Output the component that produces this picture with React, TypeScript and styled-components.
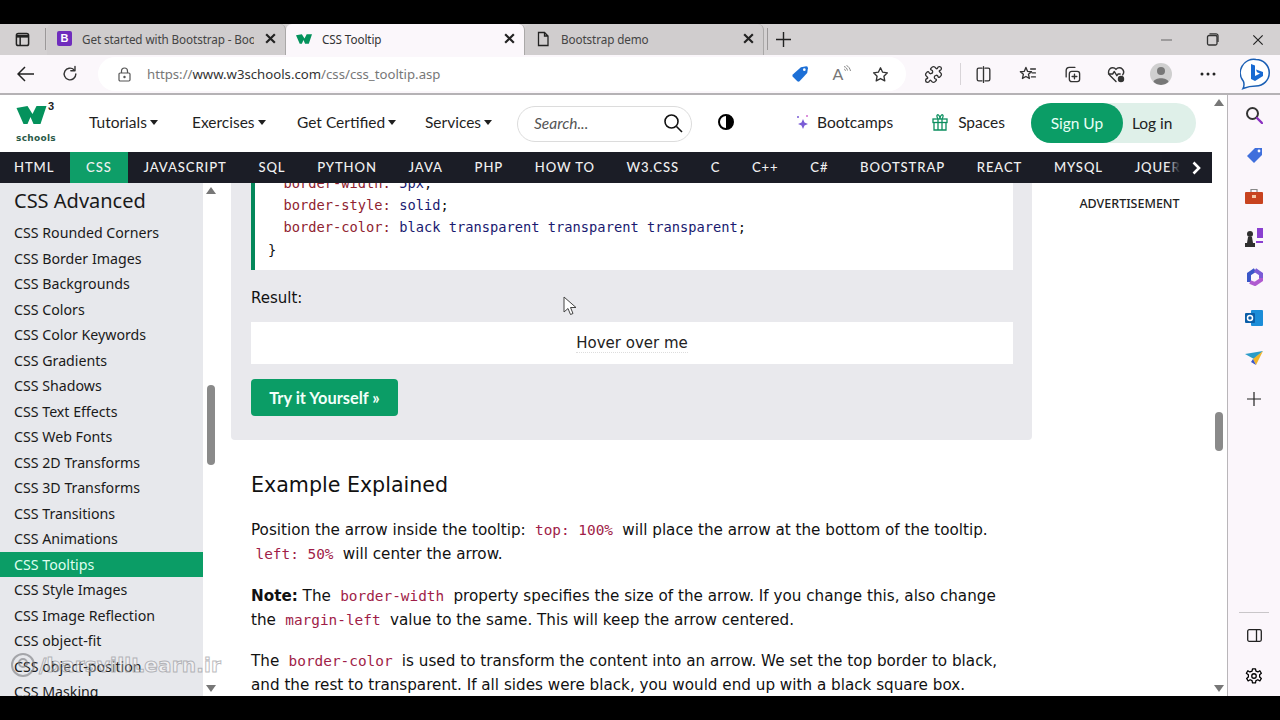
import React from "react";
import styled, { createGlobalStyle } from "styled-components";
import { Puzzle } from "lucide-react";

const Global = createGlobalStyle`
  html, body { margin: 0; padding: 0; background: #000; overflow: hidden; }
  * { box-sizing: border-box; }
`;

const Frame = styled.div`
  position: relative;
  width: 1280px;
  height: 720px;
  display: flex;
  flex-direction: column;
  background: #000;
  overflow: hidden;
  font-family: "Lato", "Noto Sans", sans-serif;
`;
const BlackBar = styled.div`
  flex: 0 0 24px;
  background: #000;
`;
const TabStrip = styled.div`
  flex: 0 0 31px;
  display: flex;
  align-items: stretch;
  background: #d4d1d2;
  color: #222;
`;
const StripIcon = styled.div<{ $w: number }>`
  flex: 0 0 ${(p) => p.$w}px;
  display: flex;
  align-items: center;
  justify-content: center;
`;
const StripSep = styled.div`
  flex: 0 0 1px;
  margin: 4px 0 5px;
  background: #9b9899;
`;
const Tab = styled.div<{ $active?: boolean }>`
  flex: 0 0 239px;
  min-width: 0;
  display: flex;
  align-items: center;
  gap: 10px;
  padding: 0 8px 2px 10px;
  font-family: "Noto Sans", sans-serif;
  font-size: 11.7px;
  letter-spacing: -0.1px;
  color: ${(p) => (p.$active ? "#333" : "#444")};
  background: ${(p) => (p.$active ? "#fbf7fb" : "#d0cdce")};
  border-right: 1px solid #aaa8a8;
  border-radius: 6px 6px 0 0;
`;
const TabTitle = styled.span`
  flex: 1;
  min-width: 0;
  white-space: nowrap;
  overflow: hidden;
`;
const FaviconB = styled.span`
  flex: 0 0 15px;
  height: 15px;
  border-radius: 2px;
  background: #6f2dbd;
  color: #fff;
  font: 700 11px/15px "Liberation Sans", sans-serif;
  text-align: center;
`;
const Spacer = styled.div`
  flex: 1;
`;
const Toolbar = styled.div`
  flex: 0 0 38px;
  display: flex;
  align-items: center;
  background: #fbf7fb;
  padding-left: 4px;
`;
const Slot = styled.div<{ $w: number }>`
  flex: 0 0 ${(p) => p.$w}px;
  height: 30px;
  display: flex;
  align-items: center;
  justify-content: center;
  color: #333;
`;
const AddressBar = styled.div`
  flex: 0 0 808px;
  height: 34px;
  margin-left: 6px;
  display: flex;
  align-items: center;
  padding: 0 9px 0 14px;
  background: #fff;
  border-radius: 17px;
`;
const Url = styled.span`
  flex: 1;
  margin-left: 11px;
  font-family: "Noto Sans", sans-serif;
  font-size: 13.2px;
  color: #777;
  white-space: nowrap;
  b { font-weight: 400; color: #333; }
`;
const ReadAloud = styled.span`
  display: flex;
  align-items: flex-start;
  font-size: 16px;
  line-height: 18px;
  color: #777;
`;
const ToolSep = styled.div`
  flex: 0 0 1px;
  height: 22px;
  background: #d8d4d8;
`;
const Workspace = styled.div`
  flex: 1;
  display: flex;
  min-height: 0;
  border-top: 2px solid #b5b2b5;
`;
const Browser = styled.div`
  position: relative;
  flex: 0 0 1228px;
  display: flex;
  flex-direction: column;
  min-width: 0;
  background: #fff;
  border-right: 1px solid #b9b6b9;
`;
const Rail = styled.div`
  flex: 1;
  display: flex;
  flex-direction: column;
  align-items: center;
  background: #fbf6fb;
`;
const RailSlot = styled.div`
  flex: 0 0 40.5px;
  display: flex;
  align-items: center;
  justify-content: center;
`;
const RailRule = styled.div`
  width: 30px;
  height: 1px;
  margin: auto 0 2px;
  background: #c9c6c9;
`;
const Header = styled.header`
  flex: 0 0 57px;
  display: flex;
  align-items: center;
  padding-bottom: 3px;
`;
const Logo = styled.div`
  flex: 0 0 89px;
  padding: 5px 0 0 16px;
  display: flex;
  flex-direction: column;
  color: #04925c;
`;
const LogoMark = styled.div`
  display: flex;
  align-items: flex-start;
  height: 27px;
`;
const LogoThree = styled.span`
  margin: -4px 0 0 1px;
  font: 700 11px/11px "Liberation Sans", sans-serif;
  color: #222;
`;
const LogoWord = styled.span`
  font: 700 9px/12px "DejaVu Sans", sans-serif;
  color: #2a5a48;
  letter-spacing: 0.3px;
`;
const Menu = styled.div`
  display: flex;
  align-items: center;
  font-size: 15.5px;
  color: #1f1f1f;
  white-space: nowrap;
`;
const MenuItem = styled.span<{ $w: number }>`
  flex: 0 0 ${(p) => p.$w}px;
  display: flex;
  align-items: center;
  gap: 3px;
  &::after {
    content: "";
    border: 4px solid transparent;
    border-top: 5px solid #1f1f1f;
    border-bottom: 0;
  }
`;
const Search = styled.div`
  flex: 0 0 175px;
  height: 36px;
  margin-top: 3px;
  display: flex;
  align-items: center;
  justify-content: space-between;
  padding: 0 8px 2px 16px;
  border: 1px solid #dcdcdc;
  border-radius: 18px;
  font-size: 15.5px;
  font-style: italic;
  color: #555;
`;
const Contrast = styled.div`
  flex: 0 0 16px;
  height: 16px;
  margin-left: 26px;
  border-radius: 50%;
  border: 2px solid #000;
  background: linear-gradient(90deg, #fff 50%, #000 50%);
`;
const HeaderLink = styled.span<{ $ml: number; $gap: number }>`
  margin-left: ${(p) => p.$ml}px;
  display: flex;
  align-items: center;
  gap: ${(p) => p.$gap}px;
  font-size: 15.5px;
  color: #222;
`;
const AuthPill = styled.div`
  margin: 1px 0 0 26px;
  flex: 0 0 165px;
  height: 40px;
  display: flex;
  align-items: center;
  border-radius: 20px;
  background: #dff0e9;
  font-size: 15.5px;
  color: #222;
`;
const SignUp = styled.span`
  flex: 0 0 92px;
  height: 40px;
  display: flex;
  align-items: center;
  justify-content: center;
  border-radius: 20px;
  background: #0b9d66;
  color: #e8fff5;
`;
const LogIn = styled.span`
  margin-left: 9px;
`;
const Nav = styled.nav`
  position: relative;
  flex: 0 0 31px;
  width: 1212px;
  display: flex;
  align-items: stretch;
  background: #1b1d26;
  overflow: hidden;
`;
const NavItem = styled.span<{ $active?: boolean }>`
  flex: none;
  display: flex;
  align-items: center;
  padding: 0 15.85px 1px;
  font-size: 13.1px;
  font-weight: 500;
  letter-spacing: 0.9px;
  color: #f0f0f0;
  white-space: nowrap;
  background: ${(p) => (p.$active ? "#0e9e68" : "transparent")};
  &:first-child { padding-left: 14px; }
`;
const NavMore = styled.span`
  position: absolute;
  right: 0;
  top: 0;
  bottom: 0;
  width: 32px;
  display: flex;
  align-items: center;
  justify-content: center;
  background: #1b1d26;
  box-shadow: -6px 0 8px #1b1d26;
  color: #fff;
`;
const Body = styled.div`
  flex: 1;
  display: flex;
  min-height: 0;
`;
const Sidebar = styled.aside`
  flex: 0 0 203px;
  overflow: hidden;
  background: #e7e8ec;
  color: #1a1a1a;
  font-family: "Noto Sans", sans-serif;
`;
const SideTitle = styled.h2`
  margin: 0;
  height: 37px;
  padding: 0 0 2px 14px;
  display: flex;
  align-items: center;
  font-size: 20px;
  font-weight: 400;
`;
const SideItem = styled.div<{ $active?: boolean }>`
  height: 25.5px;
  padding-left: 14px;
  display: flex;
  align-items: center;
  font-size: 14.2px;
  white-space: nowrap;
  color: ${(p) => (p.$active ? "#dffff0" : "#1a1a1a")};
  background: ${(p) => (p.$active ? "#0b9d66" : "transparent")};
`;
const SideScroll = styled.div`
  flex: 0 0 16px;
  display: flex;
  flex-direction: column;
  align-items: center;
  justify-content: space-between;
  padding: 4px 0 4px;
  background: #fff;
`;
const ScrollThumb = styled.div<{ $h: number; $mt: number }>`
  width: 8px;
  height: ${(p) => p.$h}px;
  margin-top: ${(p) => p.$mt}px;
  border-radius: 4px;
  background: #8a8a8a;
`;
const ArrowUp = styled.div`
  border: 5px solid transparent;
  border-top: 0;
  border-bottom: 7px solid #777;
`;
const ArrowDown = styled.div`
  border: 5px solid transparent;
  border-bottom: 0;
  border-top: 7px solid #777;
`;
const Main = styled.main`
  flex: 0 0 813px;
  padding: 0 0 0 12px;
  overflow: hidden;
`;
const Panel = styled.section`
  width: 801px;
  height: 257px;
  padding: 0 19px 0 20px;
  background: #e9e9ed;
  border-radius: 0 0 4px 4px;
`;
const CodeBox = styled.div`
  height: 87px;
  overflow: hidden;
  background: #fff;
  border-left: 4px solid #04875a;
  padding: 0 0 9px 13px;
  display: flex;
  flex-direction: column;
  justify-content: flex-end;
  font: 13.72px/22.3px "DejaVu Sans Mono", monospace;
  color: #111;
`;
const CodeLine = styled.div<{ $indent?: boolean }>`
  flex: none;
  white-space: pre;
  padding-left: ${(p) => (p.$indent ? 15.5 : 0)}px;
`;
const Prop = styled.span`
  color: #8f2330;
`;
const Val = styled.span`
  color: #1a1a70;
`;
const ResultLabel = styled.div`
  height: 52px;
  padding-top: 4px;
  display: flex;
  align-items: center;
  font: 15px "DejaVu Sans", sans-serif;
  color: #111;
`;
const ResultBox = styled.div`
  height: 42px;
  background: #fff;
  display: flex;
  align-items: center;
  justify-content: center;
  font: 15px "DejaVu Sans", sans-serif;
  color: #222;
`;
const HoverText = styled.span`
  border-bottom: 1px dotted #dddddd;
`;
const TryButton = styled.div`
  width: 147px;
  height: 37px;
  margin-top: 15px;
  padding-bottom: 1px;
  display: flex;
  align-items: center;
  justify-content: center;
  background: #0b9d66;
  border-radius: 4px;
  color: #f2fff9;
  font-size: 16.4px;
  font-weight: 700;
`;
const Article = styled.article`
  padding: 0 17px 0 20px;
  color: #111;
  font: 15.2px/24px "DejaVu Sans", sans-serif;
  white-space: nowrap;
`;
const H2 = styled.h2`
  margin: 27px 0 0;
  height: 36px;
  line-height: 36px;
  font-size: 20.6px;
  font-weight: 400;
`;
const Para = styled.p`
  margin: 15px 0 0;
  & + & { margin-top: 17.5px; }
`;
const InlineCode = styled.code`
  padding: 0 4.5px;
  font: 14.4px "DejaVu Sans Mono", monospace;
  color: #a01d48;
`;
const Ads = styled.div`
  flex: 1;
  padding-top: 12px;
  text-align: center;
  font: 500 12.5px "Noto Sans", sans-serif;
  color: #222;
`;
const PageScroll = styled.div`
  position: absolute;
  right: 0;
  top: 0;
  bottom: 0;
  width: 16px;
  display: flex;
  flex-direction: column;
  align-items: center;
  justify-content: space-between;
  padding: 4px 0;
`;
const Cursor = styled.svg`
  position: absolute;
  left: 563px;
  top: 201px;
`;
const Watermark = styled.div`
  position: absolute;
  left: 10px;
  bottom: 18px;
  display: flex;
  align-items: center;
  gap: 3px;
  font: 700 20px "DejaVu Sans", sans-serif;
  color: rgba(255, 255, 255, 0.35);
  -webkit-text-stroke: 1px rgba(120, 120, 125, 0.5);
  letter-spacing: 0.2px;
`;
const BottomBar = styled.div`
  flex: 0 0 24px;
  background: #000;
`;

const Stroke = ({ size = 18, children }: { size?: number; children: React.ReactNode }) => (
  <svg width={size} height={size} viewBox="0 0 24 24" fill="none" stroke="currentColor" strokeWidth="1.7" strokeLinecap="round" strokeLinejoin="round">
    {children}
  </svg>
);

const X = ({ size = 13, w = 2 }: { size?: number; w?: number }) => (
  <svg width={size} height={size} viewBox="0 0 12 12" stroke="#222" strokeWidth={w} fill="none">
    <path d="M2 2l8 8M10 2l-8 8" />
  </svg>
);

const side = [
  "CSS Rounded Corners", "CSS Border Images", "CSS Backgrounds", "CSS Colors", "CSS Color Keywords",
  "CSS Gradients", "CSS Shadows", "CSS Text Effects", "CSS Web Fonts", "CSS 2D Transforms",
  "CSS 3D Transforms", "CSS Transitions", "CSS Animations", "CSS Tooltips", "CSS Style Images",
  "CSS Image Reflection", "CSS object-fit", "CSS object-position", "CSS Masking",
];
const nav = ["HTML", "CSS", "JAVASCRIPT", "SQL", "PYTHON", "JAVA", "PHP", "HOW TO", "W3.CSS", "C", "C++", "C#", "BOOTSTRAP", "REACT", "MYSQL", "JQUERY"];

export default function App() {
  return (
    <Frame>
      <Global />
      <BlackBar />
      <TabStrip>
        <StripIcon $w={45}>
          <svg width="15" height="15" viewBox="0 0 16 16" fill="none" stroke="#222" strokeWidth="1.6">
            <rect x="1.5" y="1.5" width="13" height="13" rx="2" />
            <path d="M1.5 4.5h13" strokeWidth="3" />
            <path d="M5.5 5v9" />
          </svg>
        </StripIcon>
        <StripSep />
        <StripIcon $w={1} />
        <Tab>
          <FaviconB>B</FaviconB>
          <TabTitle>Get started with Bootstrap - Boot</TabTitle>
          <X />
        </Tab>
        <Tab $active>
          <svg width="16" height="12" viewBox="0 0 30 20"><path d="M0 3L11 1l5 8 4-8h10l-6 18h-7l-3-7-3 7H7z" fill="#04925c" /></svg>
          <TabTitle>CSS Tooltip</TabTitle>
          <X />
        </Tab>
        <Tab>
          <svg width="16" height="16" viewBox="0 0 16 16" fill="none" stroke="#222" strokeWidth="1.3"><path d="M3.5 1.5h6l3.5 3.5v9.500h-9.500zM9.500 1.500V5H13" /></svg>
          <TabTitle>Bootstrap demo</TabTitle>
          <X />
        </Tab>
        <StripIcon $w={3} />
        <StripSep />
        <StripIcon $w={31}>
          <svg width="15" height="15" viewBox="0 0 15 15" stroke="#222" strokeWidth="1.4"><path d="M7.500 0v15M0 7.500h15" /></svg>
        </StripIcon>
        <Spacer />
        <StripIcon $w={46}>
          <svg width="11" height="2" viewBox="0 0 11 2"><path d="M0 1h11" stroke="#777" strokeWidth="1.2" /></svg>
        </StripIcon>
        <StripIcon $w={47}>
          <svg width="13" height="13" viewBox="0 0 13 13" fill="none" stroke="#333" strokeWidth="1.3"><rect x="1.500" y="2.500" width="9.500" height="9.500" rx="1.500" /><path d="M3.500 .8h6.500a2 2 0 0 1 2 2V9" /></svg>
        </StripIcon>
        <StripIcon $w={44}><X size={14} w={1} /></StripIcon>
      </TabStrip>
      <Toolbar>
        <Slot $w={44}>
          <svg width="18" height="16" viewBox="0 0 18 16" fill="none" stroke="#222" strokeWidth="1.5"><path d="M17 8H1.500M8 1L1 8l7 7" /></svg>
        </Slot>
        <Slot $w={44}>
          <Stroke size={20}><path d="M19 12a7 7 0 1 1-2.200-5.100" /><path d="M18 3v5h-5" /></Stroke>
        </Slot>
        <AddressBar>
          <Slot $w={24}>
            <svg width="13" height="15" viewBox="0 0 13 15" fill="none" stroke="#555" strokeWidth="1.2"><rect x="1" y="6" width="11" height="8" rx="1.200" /><path d="M3.500 6V4a3 3 0 0 1 6 0v2" /><circle cx="6.500" cy="10" r=".6" fill="#555" /></svg>
          </Slot>
          <Url>https://<b>www.w3schools.com</b>/css/css_tooltip.asp</Url>
          <Slot $w={42}>
            <svg width="18" height="18" viewBox="0 0 20 20"><path d="M11 2.500L17 1.500Q19 1.500 18.800 3.500L18 9 9.500 18Q8.300 19 7 18L2 13Q1 11.800 2 10.500Z" fill="#1c6fd6" /><circle cx="14.800" cy="5.200" r="1.500" fill="#fff" /></svg>
          </Slot>
          <Slot $w={42}>
            <ReadAloud>
              A
              <svg width="8" height="10" viewBox="0 0 8 10" fill="none" stroke="#888" strokeWidth="1"><path d="M1 1.500c2 .5 3 2 3.500 4M1 4c1 .3 1.300 1 1.500 2M3.500 .5c2 .8 3.500 3 4 5.500" /></svg>
            </ReadAloud>
          </Slot>
          <Slot $w={34}>
            <Stroke size={19}><path d="M12 3.500l2.700 5.600 6 .8-4.400 4.200 1.100 6-5.400-3-5.400 3 1.100-6L3.300 9.900l6-.8z" /></Stroke>
          </Slot>
        </AddressBar>
        <Slot $w={54}>
          <Puzzle size={19} strokeWidth={1.7} />
        </Slot>
        <ToolSep />
        <Slot $w={44}>
          <Stroke size={19}><path d="M10 4H6a2 2 0 0 0-2 2v12a2 2 0 0 0 2 2h4M14 4h4a2 2 0 0 1 2 2v12a2 2 0 0 1-2 2h-4M12 2v20" /></Stroke>
        </Slot>
        <Slot $w={45}>
          <Stroke size={19}><path d="M10 3l2 5 5 .5-3.800 3.300 1.200 5.200L10 14.500 5.600 17l1.200-5.200L3 8.500 8 8zM16 5h6M18 10h4M17 15h5" /></Stroke>
        </Slot>
        <Slot $w={44}>
          <Stroke size={19}><rect x="8" y="8" width="13" height="13" rx="3" /><path d="M4 15V7a4 4 0 0 1 4-4h7M14.500 11.500v6M11.500 14.500h6" /></Stroke>
        </Slot>
        <Slot $w={44}>
          <Stroke size={20}><path d="M20 13c1.500-2 1.500-5-.5-7-2-2-5.500-2-7.500.5C10 4 6.500 4 4.500 6s-2 5.500 0 7.500L12 21M3 12h5l2-3 3 5 1.500-2H17" /><circle cx="18" cy="18" r="3" fill="currentColor" /></Stroke>
        </Slot>
        <Slot $w={46}>
          <svg width="22" height="22" viewBox="0 0 22 22"><circle cx="11" cy="11" r="11" fill="#cfcfcf" /><circle cx="11" cy="8" r="4" fill="#777" /><path d="M3.500 19c1-5 14-5 15 0a11 11 0 0 1-15 0z" fill="#777" /></svg>
        </Slot>
        <Slot $w={48}>
          <svg width="16" height="4" viewBox="0 0 16 4" fill="#222"><circle cx="2" cy="2" r="1.500" /><circle cx="8" cy="2" r="1.500" /><circle cx="14" cy="2" r="1.500" /></svg>
        </Slot>
        <Slot $w={46}>
          <svg width="30" height="32" viewBox="0 0 30 32" fill="none"><path d="M16 1.500a13 13 0 0 1 0 26.500c-4 0-8 .5-13 2.500 1-2 1.500-4 .5-7A13.500 13.500 0 0 1 16 1.500z" stroke="#1a5fb4" strokeWidth="1.500" fill="#fff" /><path d="M11 6l4 1.500V18l5-2.500-3-1.300-1-2.700 7 2.500v4L15 23l-4-2z" fill="#1769d2" /></svg>
        </Slot>
      </Toolbar>
      <Workspace>
        <Browser>
          <Header>
            <Logo>
              <LogoMark>
                <svg width="31" height="20" viewBox="0 0 30 20"><path d="M0 3L11 1l5 8 4-8h10l-6 18h-7l-3-7-3 7H7z" fill="#04925c" /></svg>
                <LogoThree>3</LogoThree>
              </LogoMark>
              <LogoWord>schools</LogoWord>
            </Logo>
            <Menu>
              <MenuItem $w={103}>Tutorials</MenuItem>
              <MenuItem $w={105}>Exercises</MenuItem>
              <MenuItem $w={128}>Get Certified</MenuItem>
              <MenuItem $w={92}>Services</MenuItem>
            </Menu>
            <Search>
              Search...
              <svg width="20" height="20" viewBox="0 0 20 20" fill="none" stroke="#111" strokeWidth="1.600"><circle cx="8.500" cy="8.500" r="6.500" /><path d="M13.500 13.500L19 19" /></svg>
            </Search>
            <Contrast />
            <HeaderLink $ml={62} $gap={7}>
              <svg width="14" height="16" viewBox="0 0 14 16" fill="#7a5cd6"><path d="M7 5l1.500 3.500L12 10l-3.500 1.500L7 15l-1.500-3.500L2 10l3.500-1.500z" /><circle cx="2" cy="3" r="1" /><circle cx="11" cy="2" r="1" fill="#d06cd0" /></svg>
              Bootcamps
            </HeaderLink>
            <HeaderLink $ml={38} $gap={9}>
              <svg width="18" height="18" viewBox="0 0 18 18" fill="none" stroke="#0b8f5f" strokeWidth="1.300"><rect x="2" y="6" width="14" height="3.500" /><path d="M3 9.500V17h12V9.500M7 6v11M11 6v11M7 6C5 3 6 1 7.500 2 9 3 9 6 9 6s0-3 1.500-4C12 1 13 3 11 6" /></svg>
              Spaces
            </HeaderLink>
            <AuthPill>
              <SignUp>Sign Up</SignUp>
              <LogIn>Log in</LogIn>
            </AuthPill>
          </Header>
          <Nav>
            {nav.map((n) => (
              <NavItem key={n} $active={n === "CSS"}>{n}</NavItem>
            ))}
            <NavMore>
              <svg width="9" height="14" viewBox="0 0 9 14" fill="none" stroke="#fff" strokeWidth="2.600"><path d="M1.500 1.500L7 7l-5.500 5.500" /></svg>
            </NavMore>
          </Nav>
          <Body>
            <Sidebar>
              <SideTitle>CSS Advanced</SideTitle>
              {side.map((s) => (
                <SideItem key={s} $active={s === "CSS Tooltips"}>{s}</SideItem>
              ))}
            </Sidebar>
            <SideScroll>
              <ArrowUp />
              <ScrollThumb $h={80} $mt={191} />
              <Spacer />
              <ArrowDown />
            </SideScroll>
            <Main>
              <Panel>
                <CodeBox>
                  <CodeLine $indent><Prop>border-width:</Prop> <Val>5px</Val>;</CodeLine>
                  <CodeLine $indent><Prop>border-style:</Prop> <Val>solid</Val>;</CodeLine>
                  <CodeLine $indent><Prop>border-color:</Prop> <Val>black transparent transparent transparent</Val>;</CodeLine>
                  <CodeLine>{"}"}</CodeLine>
                </CodeBox>
                <ResultLabel>Result:</ResultLabel>
                <ResultBox><HoverText>Hover over me</HoverText></ResultBox>
                <TryButton>Try it Yourself »</TryButton>
              </Panel>
              <Article>
                <H2>Example Explained</H2>
                <Para>
                  Position the arrow inside the tooltip: <InlineCode>top: 100%</InlineCode> will place the arrow at the bottom of the tooltip.<br />
                  <InlineCode>left: 50%</InlineCode> will center the arrow.
                </Para>
                <Para>
                  <strong>Note:</strong> The <InlineCode>border-width</InlineCode> property specifies the size of the arrow. If you change this, also change<br />
                  the <InlineCode>margin-left</InlineCode> value to the same. This will keep the arrow centered.
                </Para>
                <Para>
                  The <InlineCode>border-color</InlineCode> is used to transform the content into an arrow. We set the top border to black,<br />
                  and the rest to transparent. If all sides were black, you would end up with a black square box.
                </Para>
              </Article>
            </Main>
            <Ads>ADVERTISEMENT</Ads>
          </Body>
          <PageScroll>
            <ArrowUp />
            <ScrollThumb $h={39} $mt={306} />
            <Spacer />
            <ArrowDown />
          </PageScroll>
          <Cursor width="14" height="20" viewBox="0 0 14 20" fill="#fff" stroke="#444" strokeWidth="1">
            <path d="M1 1v15l4-3.500 2.500 6 2.500-1-2.500-6H13z" />
          </Cursor>
          <Watermark>
            <svg width="26" height="26" viewBox="0 0 26 26" fill="none" stroke="rgba(120,120,125,.6)" strokeWidth="2"><circle cx="13" cy="13" r="11" /><circle cx="13" cy="11" r="4" /></svg>
            /barsvillLearn.ir
          </Watermark>
        </Browser>
        <Rail>
          <RailSlot>
            <svg width="18" height="18" viewBox="0 0 18 18" fill="none"><circle cx="7.500" cy="7.500" r="5.500" stroke="#333" strokeWidth="2" /><path d="M12 12l5 5" stroke="#8a2fc0" strokeWidth="2.400" strokeLinecap="round" /></svg>
          </RailSlot>
          <RailSlot>
            <svg width="17" height="17" viewBox="0 0 17 17"><path d="M9 1h7v7l-8 8-7-7z" fill="#3f6fdc" /><circle cx="13" cy="4" r="1.400" fill="#fff" /></svg>
          </RailSlot>
          <RailSlot>
            <svg width="18" height="16" viewBox="0 0 18 16"><path d="M6 4V1.500h6V4" fill="none" stroke="#888" strokeWidth="1.200" /><rect y="4" width="18" height="12" rx="1" fill="#c8431f" /><rect x="7" y="7" width="4" height="3" fill="#f5c9a8" /></svg>
          </RailSlot>
          <RailSlot>
            <svg width="18" height="20" viewBox="0 0 18 20"><path d="M12 1h6v10h-6z" fill="#8a3fd0" /><circle cx="5" cy="7" r="3" fill="#2f2f2f" /><path d="M3 10h4l1 6H2zM0 16h10v4H0z" fill="#2f2f2f" /><path d="M11 14h7v2h-7z" fill="#8a3fd0" /></svg>
          </RailSlot>
          <RailSlot>
            <svg width="18" height="18" viewBox="0 0 18 18" fill="none" strokeWidth="4"><path d="M4 14V6l6-4" stroke="#3a56c8" /><path d="M10 2l6 4v4" stroke="#7a5bd6" /><path d="M16 10v2l-6 4-5-2" stroke="#b05ad0" /></svg>
          </RailSlot>
          <RailSlot>
            <svg width="18" height="18" viewBox="0 0 18 18"><rect x="6" y="1" width="12" height="16" rx="1" fill="#1b8dd8" /><rect y="4" width="10" height="10" rx="1" fill="#0a5ea8" /><circle cx="5" cy="9" r="2.500" fill="none" stroke="#fff" strokeWidth="1.500" /></svg>
          </RailSlot>
          <RailSlot>
            <svg width="18" height="14" viewBox="0 0 18 14"><path d="M0 3l18-3-9 8z" fill="#2a9bc8" /><path d="M18 0L11 14 8 8z" fill="#f0b429" /><path d="M8 8l3 6-5-3z" fill="#3a56c8" /></svg>
          </RailSlot>
          <RailSlot>
            <svg width="14" height="14" viewBox="0 0 14 14" stroke="#222" strokeWidth="1.200"><path d="M7 0v14M0 7h14" /></svg>
          </RailSlot>
          <RailRule />
          <RailSlot>
            <svg width="15" height="13" viewBox="0 0 15 13" fill="none" stroke="#222" strokeWidth="1.300"><rect x=".7" y=".7" width="13.600" height="11.600" rx="1.500" /><path d="M9.500 .7v11.600" /></svg>
          </RailSlot>
          <RailSlot>
            <Stroke size={18}><circle cx="12" cy="12" r="3" /><path d="M10 2.500h4l.6 3 2.600 1.100 2.600-1.600 2 3.400-2.300 2 0 2.800 2.300 2-2 3.400-2.600-1.600-2.600 1.100-.6 3h-4l-.6-3-2.600-1.100-2.600 1.600-2-3.400 2.300-2v-2.800L1.800 8.400l2-3.400 2.600 1.600L9.400 5.500z" /></Stroke>
          </RailSlot>
        </Rail>
      </Workspace>
      <BottomBar />
    </Frame>
  );
}
